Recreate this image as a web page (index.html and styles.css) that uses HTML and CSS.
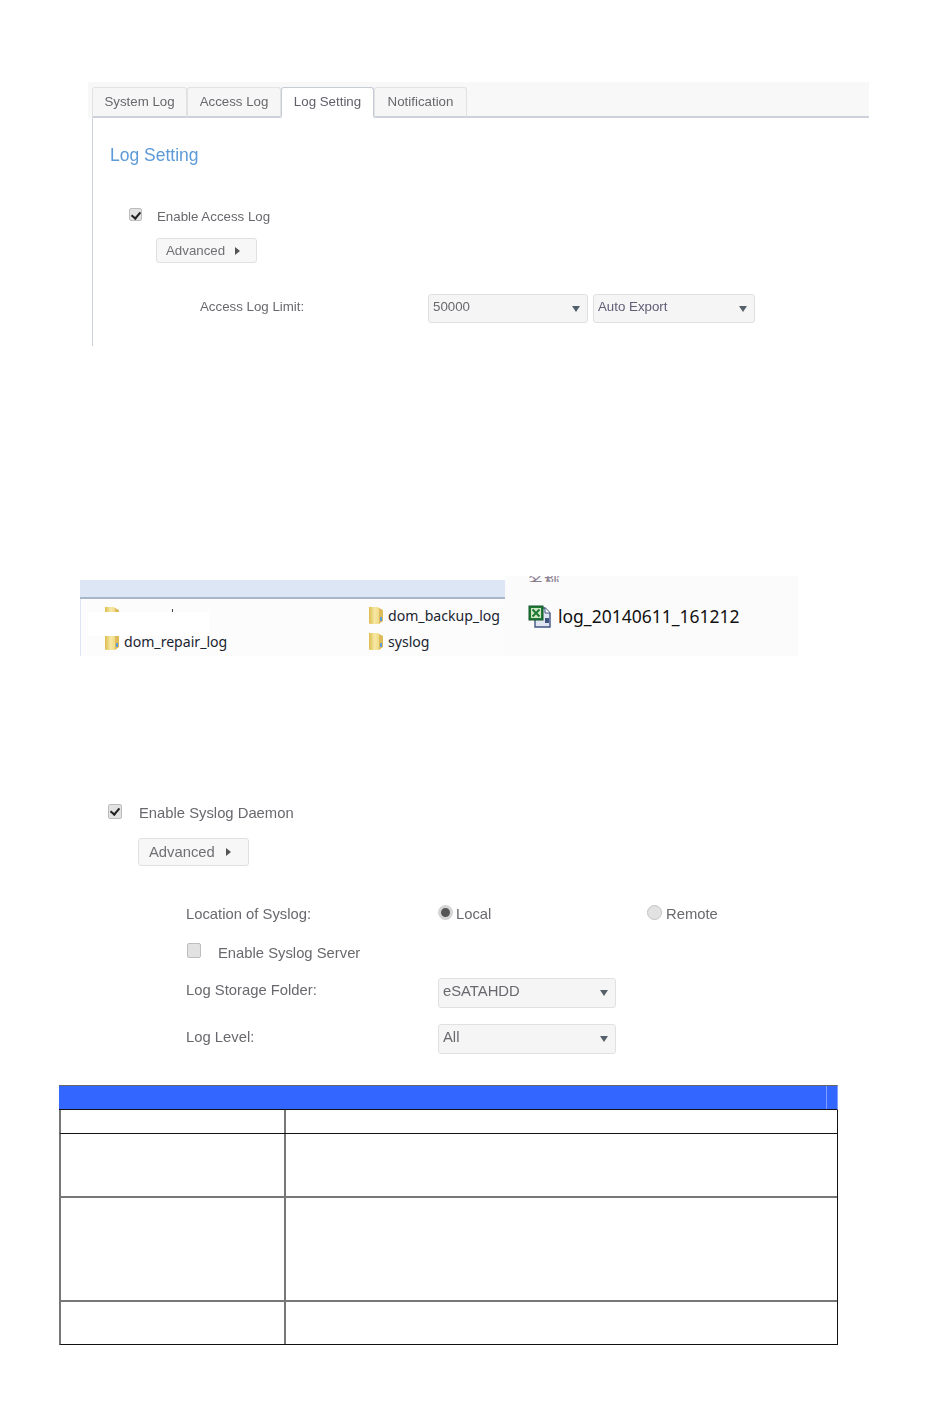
FILE: index.html
```html
<!DOCTYPE html>
<html>
	<head>
		<meta charset="utf-8">
		<title>Log Setting</title>
		<link rel="stylesheet" href="styles.css">
	</head>
	<body>
		<svg class="defs" width="0" height="0">
			<defs>
				<linearGradient id="folderFill" x1="0" y1="0" x2="1" y2="0">
					<stop offset="0" stop-color="#dcbc4e"/>
					<stop offset="0.55" stop-color="#f6e8a4"/>
					<stop offset="1" stop-color="#f0da88"/>
				</linearGradient>
				<symbol id="folder" viewBox="0 0 16 17">
					<path d="M1 0h9l1 1v16H2l-1-1z" fill="url(#folderFill)"/>
					<path d="M11 1l4 2v11l-4 3z" fill="#dcbb58"/>
					<path d="M12 10h2v4h-2z" fill="#5f9bd8"/>
				</symbol>
			</defs>
		</svg>

		<!-- log setting -->
		<div class="log-panel">
			<div class="tab-bar">
				<ul class="tabs">
					<li>System Log</li>
					<li>Access Log</li>
					<li class="current">Log Setting</li>
					<li>Notification</li>
				</ul>
			</div>
			<div class="log-body">
				<h2 class="log-title">Log Setting</h2>
				<div class="check-row">
					<span class="check checked"></span>
					<span>Enable Access Log</span>
				</div>
				<div class="btn btn-small">Advanced <i class="arrow"></i></div>
				<div class="limit-row">
					<span class="limit-label">Access Log Limit:</span>
					<div class="select select-limit"><span>50000</span><i class="caret"></i></div>
					<div class="select select-export"><span>Auto Export</span><i class="caret"></i></div>
				</div>
			</div>
		</div>

		<!-- file list -->
		<div class="explorer">
			<div class="explorer-left">
				<div class="explorer-head"></div>
				<div class="files">
					<div class="file"><svg class="folder"><use href="#folder"/></svg></div>
					<div class="file"><svg class="folder"><use href="#folder"/></svg>dom_backup_log</div>
					<div class="file"><svg class="folder"><use href="#folder"/></svg>dom_repair_log</div>
					<div class="file"><svg class="folder"><use href="#folder"/></svg>syslog</div>
				</div>
				<div class="patch"></div>
			</div>
			<div class="explorer-right">
				<div class="clipped"><span>名称</span></div>
				<div class="sheet">
					<svg class="xls" width="24" height="23" viewBox="0 0 24 23">
						<path d="M7 3h10l5 5v14H7z" fill="#dfe6f2" stroke="#3f5580" stroke-width="1.4"/>
						<path d="M17 3v5h5" fill="#fff" stroke="#3f5580"/>
						<path d="M17 13h4v5h-4z" fill="#3f5580"/>
						<rect x="1" y="1" width="14" height="14" fill="#1f7a34" stroke="#14562a"/>
						<rect x="3" y="3" width="10" height="10" fill="#cfe6c6"/>
						<path d="M4.500 4.500l7 7M11.500 4.500l-7 7" stroke="#1f7a34" stroke-width="2"/>
					</svg>
					<span>log_20140611_161212</span>
				</div>
			</div>
		</div>

		<!-- syslog -->
		<div class="syslog">
			<div class="check-row syslog-enable">
				<span class="check check-large checked"></span>
				<span>Enable Syslog Daemon</span>
			</div>
			<div class="btn btn-large">Advanced <i class="arrow"></i></div>
			<div class="syslog-form">
				<span>Location of Syslog:</span>
				<label class="radio-item radio-local"><i class="radio on"></i>Local</label>
				<label class="radio-item"><i class="radio"></i>Remote</label>

				<div class="server-row">
					<span class="check check-large"></span>
					<span>Enable Syslog Server</span>
				</div>

				<span class="field-label">Log Storage Folder:</span>
				<div class="select select-form"><span>eSATAHDD</span><i class="caret"></i></div>
				<span></span>

				<span class="field-label">Log Level:</span>
				<div class="select select-form"><span>All</span><i class="caret"></i></div>
				<span></span>
			</div>
		</div>

		<!-- table -->
		<div class="grid-table">
			<div class="table-head"><i></i></div>
			<div class="table-row row-a"><div></div><div></div></div>
			<div class="table-row row-b"><div></div><div></div></div>
			<div class="table-row row-c"><div></div><div></div></div>
			<div class="table-row row-d"><div></div><div></div></div>
		</div>
	</body>
</html>
```

FILE: styles.css
```css
*{
	padding: 0;
	margin: 0;
	box-sizing: border-box;
}
ul{
	list-style: none;
}
html,body{
	width: 100%;
	height: 100%;
}
body{
	background: #fff;
	font-family: "Liberation Sans", Arial, sans-serif;
	font-size: 13.3px;
	color: #68686e;
}
.defs{
	position: absolute;
}

/* log setting */
.log-panel{
	width: 781px;
	height: 264px;
	margin: 82px 0 0 88px;
	filter: blur(0.5px);
}
.tab-bar{
	height: 36px;
	padding-left: 4px;
	background: #f8f8f8;
}
.tabs{
	display: flex;
	align-items: flex-end;
	height: 36px;
	border-bottom: 2px solid #cdd1dc;
}
.tabs li{
	width: 95px;
	height: 31px;
	margin-bottom: -2px;
	padding-top: 6px;
	text-align: center;
	background: #f6f6f6;
	border: 1px solid #e2e2e2;
	border-bottom: 2px solid #cdd1dc;
	border-radius: 3px 3px 0 0;
}
.tabs li:nth-child(2){
	width: 94px;
}
.tabs li:nth-child(4){
	width: 93px;
}
.tabs li.current{
	width: 93px;
	background: #fff;
	border: 1px solid #c6cbd8;
	border-bottom: 2px solid #fff;
	color: #60606a;
}
.log-body{
	height: 228px;
	margin-left: 4px;
	padding: 25px 0 0 17px;
	border-left: 1px solid #cdd1dc;
}
.log-title{
	font-size: 17.500px;
	font-weight: 400;
	line-height: 24px;
	color: #5c9ad8;
}
.check-row{
	display: flex;
	align-items: center;
}
.log-body .check-row{
	height: 20px;
	margin: 39px 0 0 19px;
	gap: 15px;
}
.check{
	width: 13px;
	height: 13px;
	margin-top: -4px;
	background: #e2e2e2;
	border: 1px solid #bdbdbd;
	border-radius: 2px;
	position: relative;
}
.check-large{
	width: 14px;
	height: 15px;
}
.check.checked:after{
	content: "";
	position: absolute;
	left: 3px;
	top: 1px;
	width: 4px;
	height: 7px;
	border: solid #222;
	border-width: 0 2px 2px 0;
	transform: rotate(40deg);
}
.btn{
	display: flex;
	align-items: center;
	background: #f7f7f7;
	border: 1px solid #e0e0e0;
	border-radius: 3px;
	color: #707074;
}
.btn-small{
	width: 101px;
	height: 25px;
	margin: 12px 0 0 46px;
	padding-left: 9px;
}
.btn-large{
	width: 111px;
	height: 28px;
	margin: 15px 0 0 30px;
	padding-left: 10px;
}
.arrow{
	width: 0;
	height: 0;
	margin-left: 10px;
	border-left: 5px solid #555;
	border-top: 4px solid transparent;
	border-bottom: 4px solid transparent;
}
.btn-large .arrow{
	margin-left: 11px;
}
.limit-row{
	display: flex;
	align-items: center;
	margin: 31px 0 0 90px;
}
.limit-label{
	width: 228px;
	margin-bottom: 5px;
}
.select{
	display: flex;
	align-items: center;
	justify-content: space-between;
	background: #f5f5f5;
	border: 1px solid #e0e0e0;
	border-radius: 3px;
	padding: 0 7px 4px 4px;
}
.select-limit{
	width: 160px;
	height: 29px;
	margin-right: 5px;
}
.select-export{
	width: 162px;
	height: 29px;
	color: #605d76;
}
.caret{
	width: 0;
	height: 0;
	margin-top: 4px;
	border-top: 6px solid #55606a;
	border-left: 4px solid transparent;
	border-right: 4px solid transparent;
}

/* file list */
.explorer{
	display: flex;
	width: 718px;
	height: 80px;
	margin: 230px 0 0 80px;
	font-family: "Noto Sans", sans-serif;
	color: #1a2430;
}
.explorer-left{
	position: relative;
	width: 425px;
	padding-top: 4px;
}
.explorer-head{
	height: 19px;
	background: #dce6f4;
	border-bottom: 2px solid #a9b5c8;
}
.files{
	display: grid;
	grid-template-columns: 264px 1fr;
	grid-auto-rows: 26px;
	height: 57px;
	padding: 3px 0 0 23px;
	background: #fcfcfc;
	border-left: 1px solid #dce6f4;
	font-size: 14.100px;
}
.file{
	display: flex;
	align-items: center;
	gap: 4px;
}
.folder{
	width: 16px;
	height: 17px;
}
.patch{
	position: absolute;
	left: 8px;
	top: 36px;
	width: 121px;
	height: 24px;
	background: #fff;
}
.patch:before{
	content: "";
	position: absolute;
	left: 84px;
	top: -3px;
	width: 1px;
	height: 3px;
	background: #444;
}
.explorer-right{
	width: 293px;
	background: #fbfbfb;
}
.clipped{
	height: 6px;
	overflow: hidden;
	padding-left: 23px;
	font-family: "Noto Sans CJK SC", sans-serif;
	font-size: 16px;
	line-height: 6px;
	color: #8a7f90;
}
.sheet{
	display: flex;
	align-items: center;
	gap: 6px;
	margin-top: 22px;
	padding-left: 23px;
	font-size: 17.500px;
	line-height: 24px;
	color: #111;
}

/* syslog */
.syslog{
	margin: 147px 0 0 108px;
	font-size: 14.800px;
	filter: blur(0.5px);
}
.syslog-enable{
	height: 20px;
	gap: 17px;
}
.syslog-form{
	display: grid;
	grid-template-columns: 252px 209px 1fr;
	grid-template-rows: 36px 42px 37px 56px;
	align-items: center;
	margin: 30px 0 0 78px;
}
.field-label{
	margin-bottom: 5px;
}
.radio-item{
	display: flex;
	align-items: center;
	gap: 4px;
}
.radio-local{
	gap: 3px;
}
.radio{
	width: 15px;
	height: 15px;
	margin-top: -4px;
	background: #e2e2e2;
	border: 1px solid #c2c2c2;
	border-radius: 50%;
}
.radio.on{
	border: 3px solid #d4d4d4;
	background: #555;
}
.server-row{
	grid-column: 1 / 4;
	display: flex;
	align-items: center;
	gap: 17px;
	padding-left: 1px;
}
.server-row .check{
	margin-top: -6px;
}
.select-form{
	width: 178px;
	height: 30px;
}

/* table */
.grid-table{
	width: 779px;
	margin: 18px 0 0 59px;
	border-right: 1px solid #111;
}
.table-head{
	position: relative;
	height: 25px;
	background: #3366ff;
	border-top: 1px solid #666;
	border-right: 1px solid #7f9eff;
	border-bottom: 1px solid #111;
	margin-right: -1px;
}
.table-head i{
	position: absolute;
	left: 767px;
	top: 0;
	bottom: 0;
	width: 1px;
	background: #7f9eff;
}
.table-row{
	display: grid;
	grid-template-columns: 223px 1fr;
	border-left: 2px solid #777;
}
.table-row div + div{
	border-left: 2px solid #777;
}
.row-a{
	height: 24px;
	border-bottom: 1px solid #111;
}
.row-b{
	height: 64px;
	border-bottom: 2px solid #777;
}
.row-c{
	height: 104px;
	border-bottom: 2px solid #777;
}
.row-d{
	height: 43px;
	border-bottom: 1px solid #111;
}
```
